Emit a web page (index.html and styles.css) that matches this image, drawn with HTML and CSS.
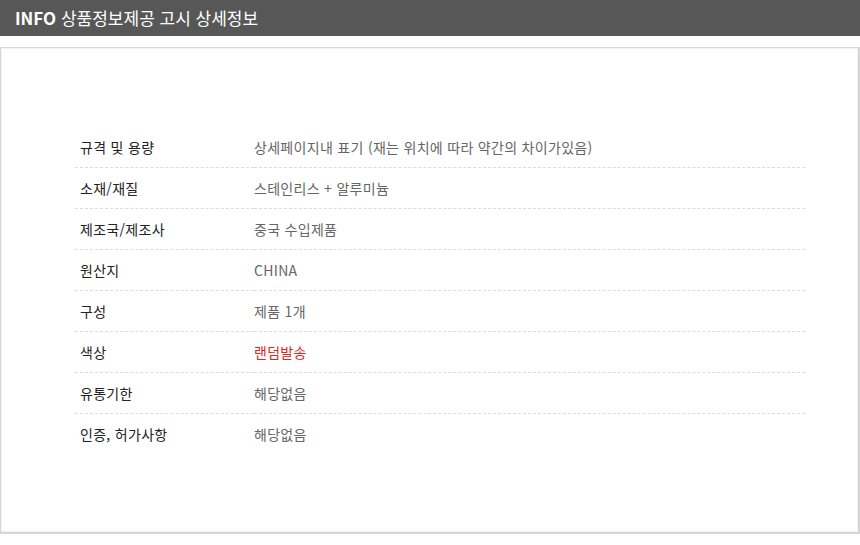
FILE: index.html
```html
<!DOCTYPE html>
<html lang="ko">
<head>
<meta charset="utf-8">
<link rel="stylesheet" href="styles.css">
</head>
<body>
<div class="header"><span class="info">INFO</span> 상품정보제공 고시 상세정보</div>
<div class="box">
  <div class="inner">
    <table class="spec">
      <tr><th>규격 및 용량</th><td>상세페이지내 표기 (재는 위치에 따라 약간의 차이가있음)</td></tr>
      <tr><th>소재/재질</th><td>스테인리스 + 알루미늄</td></tr>
      <tr><th>제조국/제조사</th><td>중국 수입제품</td></tr>
      <tr><th>원산지</th><td>CHINA</td></tr>
      <tr><th>구성</th><td>제품 1개</td></tr>
      <tr><th>색상</th><td class="red">랜덤발송</td></tr>
      <tr><th>유통기한</th><td>해당없음</td></tr>
      <tr class="last"><th>인증, 허가사항</th><td>해당없음</td></tr>
    </table>
  </div>
</div>
</body>
</html>
```
FILE: styles.css
```css
html, body { margin: 0; padding: 0; background: #fff; }
body { font-family: "Noto Sans CJK KR", "Noto Sans", sans-serif; }
.header {
  height: 36px;
  background: #575757;
  color: #fff;
  font-size: 17px;
  line-height: 36px;
  padding-left: 15px;
}
.header .info { font-weight: bold; }
.box {
  margin-top: 11px;
  width: 860px;
  height: 487px;
  box-sizing: border-box;
  border: 1px solid #d6d6d6;
  border-right-width: 2px;
  border-bottom-width: 2px;
}
.inner {
  height: 100%;
  box-sizing: border-box;
  border: 1px solid #f2f2f2;
  padding: 78px 53px 0 73px;
}
.spec {
  width: 730px;
  border-collapse: collapse;
  font-size: 14px;
  line-height: 20px;
  letter-spacing: 0.3px;
}
.spec th, .spec td {
  padding: 10px 0 10px;
  border-bottom: 1px dashed #dcdcdc;
  text-align: left;
  vertical-align: middle;
}
.spec th {
  width: 174px;
  padding-left: 5px;
  font-weight: normal;
  color: #222;
}
.spec td { color: #666; }
.spec td.red { color: #e2231a; }
.spec tr.last th, .spec tr.last td { border-bottom: none; }
```
